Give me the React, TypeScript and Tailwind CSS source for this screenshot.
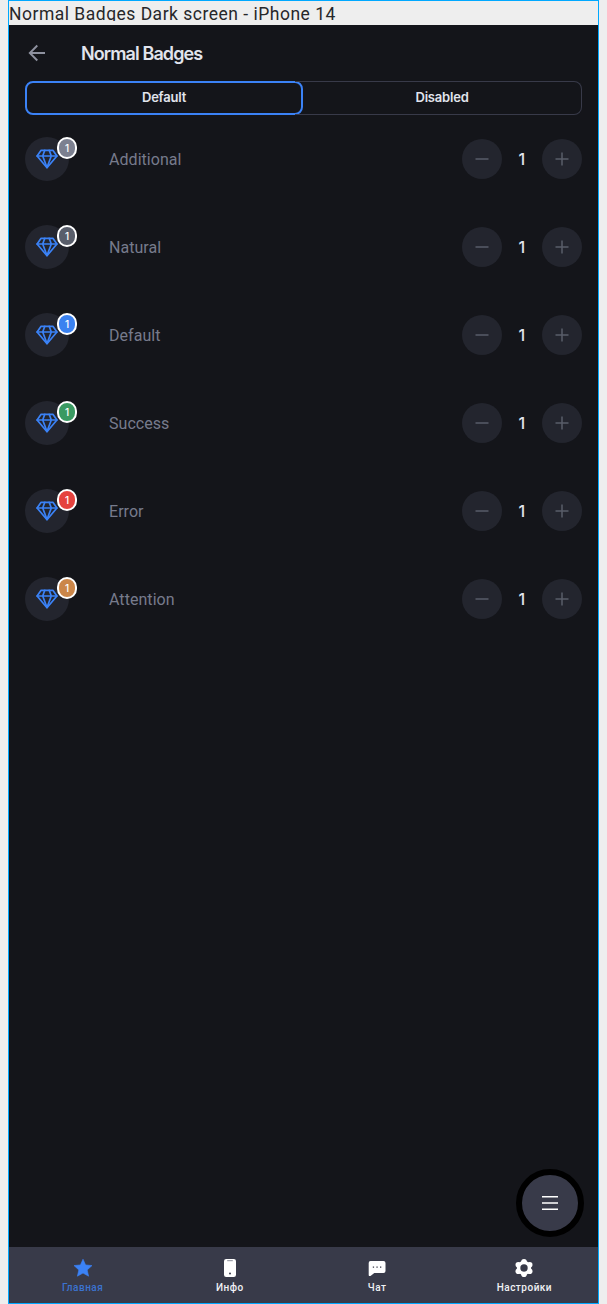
const badges = [
  { name: 'Additional', color: 'bg-[#7c8090]' },
  { name: 'Natural', color: 'bg-[#595e6b]' },
  { name: 'Default', color: 'bg-[#3b82f0]' },
  { name: 'Success', color: 'bg-[#3a9a62]' },
  { name: 'Error', color: 'bg-[#e5423e]' },
  { name: 'Attention', color: 'bg-[#cb8649]' },
];

function Diamond() {
  return (
    <svg width="24" height="24" viewBox="0 0 24 24" fill="none" stroke="#3b82f6" strokeWidth="1.7" strokeLinejoin="round" strokeLinecap="round">
      <path d="M6.100 3.300h11.800l4 5.700L12 20.700 2.100 9z" />
      <path d="M2.100 9h19.800M9.800 3.300 7.700 9 12 20.500 16.300 9l-2.100-5.700" />
    </svg>
  );
}

function StepButton({ plus }: { plus?: boolean }) {
  return (
    <button className="flex size-10 items-center justify-center rounded-full bg-[#23252e]">
      <svg width="14" height="14" viewBox="0 0 14 14" stroke="#595d6a" strokeWidth="1.5">
        <path d={plus ? 'M.5 7h13M7 .5v13' : 'M.5 7h13'} />
      </svg>
    </button>
  );
}

function BadgeRow({ name, color }: { name: string; color: string }) {
  return (
    <div className="flex h-[44px] items-center">
      <div className="relative flex size-11 items-center justify-center rounded-full bg-[#23252e]">
        <Diamond />
        <span className={`absolute -right-2 top-0 flex h-[22px] w-5 items-center justify-center rounded-[10px] border-2 border-white text-[10px] font-medium leading-none text-white ${color}`}>
          1
        </span>
      </div>
      <span className="ml-10 pt-0.5 font-['Roboto',sans-serif] text-[16px] leading-6 tracking-[0.05px] text-[#777b8c]">{name}</span>
      <div className="ml-auto flex items-center">
        <StepButton />
        <span className="w-[39.6px] pr-px text-center text-[16px] font-medium leading-6 text-[#e1e4ed]">1</span>
        <StepButton plus />
      </div>
    </div>
  );
}

const tabs = [
  { label: 'Главная', icon: <path fill="#3b82f6" stroke="#3b82f6" strokeWidth=".6" strokeLinejoin="round" d="M10 1.200l2.600 5.700 6.400.7-4.800 4.300 1.400 6.300L10 15.100l-5.600 3.100 1.400-6.300L1 7.600l6.400-.7z" /> },
  {
    label: 'Инфо',
    icon: (
      <>
        <rect x="4" y="1" width="12" height="18" rx="2.200" fill="#fff" />
        <path d="M7.200 2.700h5.600" stroke="#8b8d98" strokeWidth="1" />
        <circle cx="10" cy="15.500" r="1" fill="#383a49" />
      </>
    ),
  },
  {
    label: 'Чат',
    icon: (
      <>
        <path fill="#fff" d="M3.500 3h13a2 2 0 0 1 2 2v8a2 2 0 0 1-2 2H7.300l-3.500 2.800c-.9.700-2.100.2-2.100-.9V5a2 2 0 0 1 1.800-2z" />
        <path d="M5.800 9.200h1.300M9.400 9.200h1.300M13 9.200h1.300" stroke="#383a49" strokeWidth="1.200" />
      </>
    ),
  },
  {
    label: 'Настройки',
    icon: (
      <>
        <g fill="#fff">
          <circle cx="10" cy="10" r="7.200" />
          <circle cx="10" cy="3.800" r="2.800" />
          <circle cx="15.700" cy="6.800" r="2.800" />
          <circle cx="15.700" cy="13.200" r="2.800" />
          <circle cx="10" cy="16.200" r="2.800" />
          <circle cx="4.300" cy="13.200" r="2.800" />
          <circle cx="4.300" cy="6.800" r="2.800" />
        </g>
        <circle cx="10" cy="10" r="3.700" fill="#383a49" />
      </>
    ),
  },
];

export default function App() {
  return (
    <div className="h-[1304px] bg-[#eeeeee] pl-2 pr-2 font-['Inter',sans-serif]">
      <div className="relative flex h-full w-[591px] flex-col border border-[#00a8ff]">
        <div className="h-6 shrink-0">
          <div className="h-[19.5px] overflow-hidden whitespace-nowrap font-['Roboto',sans-serif] text-[17.500px] leading-[26px] tracking-[0.5px] text-[#27272a]">
            Normal Badges Dark screen - iPhone 14
          </div>
        </div>
        <main className="flex flex-1 flex-col bg-[#14151a] px-4">
          <header className="flex h-14 items-center">
            <svg width="24" height="24" viewBox="0 0 24 24" fill="none" stroke="#8e919f" strokeWidth="1.900">
              <path d="M20 12H5M12.300 4.500 4.800 12l7.500 7.500" />
            </svg>
            <h1 className="ml-8 pt-0.5 text-[18px] font-semibold leading-6 tracking-[-0.9px] text-[#e1e4ed]">Normal Badges</h1>
          </header>
          <div className="flex h-[34px] rounded-lg text-[13px] font-semibold tracking-[-0.2px] text-[#e1e4ed]">
            <button className="w-[278px] rounded-lg border-2 border-[#3b82f6]">Default</button>
            <button className="-ml-2 flex-1 rounded-r-lg border border-l-0 border-[#383a49] pl-2">Disabled</button>
          </div>
          <div className="mt-[22px] flex flex-col gap-[44px]">
            {badges.map((badge) => (
              <BadgeRow key={badge.name} {...badge} />
            ))}
          </div>
        </main>
        <button className="absolute bottom-[66px] right-[14px] flex size-[68px] items-center justify-center rounded-full border-[6px] border-black bg-[#383a49]">
          <svg width="16" height="16" viewBox="0 0 16 16" stroke="#fff" strokeWidth="1.500">
            <path d="M0 1.750h16M0 8h16M0 14.250h16" />
          </svg>
        </button>
        <nav className="grid h-14 shrink-0 grid-cols-4 bg-[#383a49]">
          {tabs.map((tab, index) => (
            <button key={tab.label} className={`flex flex-col items-center pt-[11px] font-['Roboto',sans-serif] text-[10px] font-medium leading-[14px] tracking-[0.5px] ${index === 0 ? 'text-[#3b73d0]' : 'text-[#f0f1f4]'}`}>
              <svg width="20" height="20" viewBox="0 0 20 20">{tab.icon}</svg>
              <span className="mt-[3px]">{tab.label}</span>
            </button>
          ))}
        </nav>
      </div>
    </div>
  );
}
